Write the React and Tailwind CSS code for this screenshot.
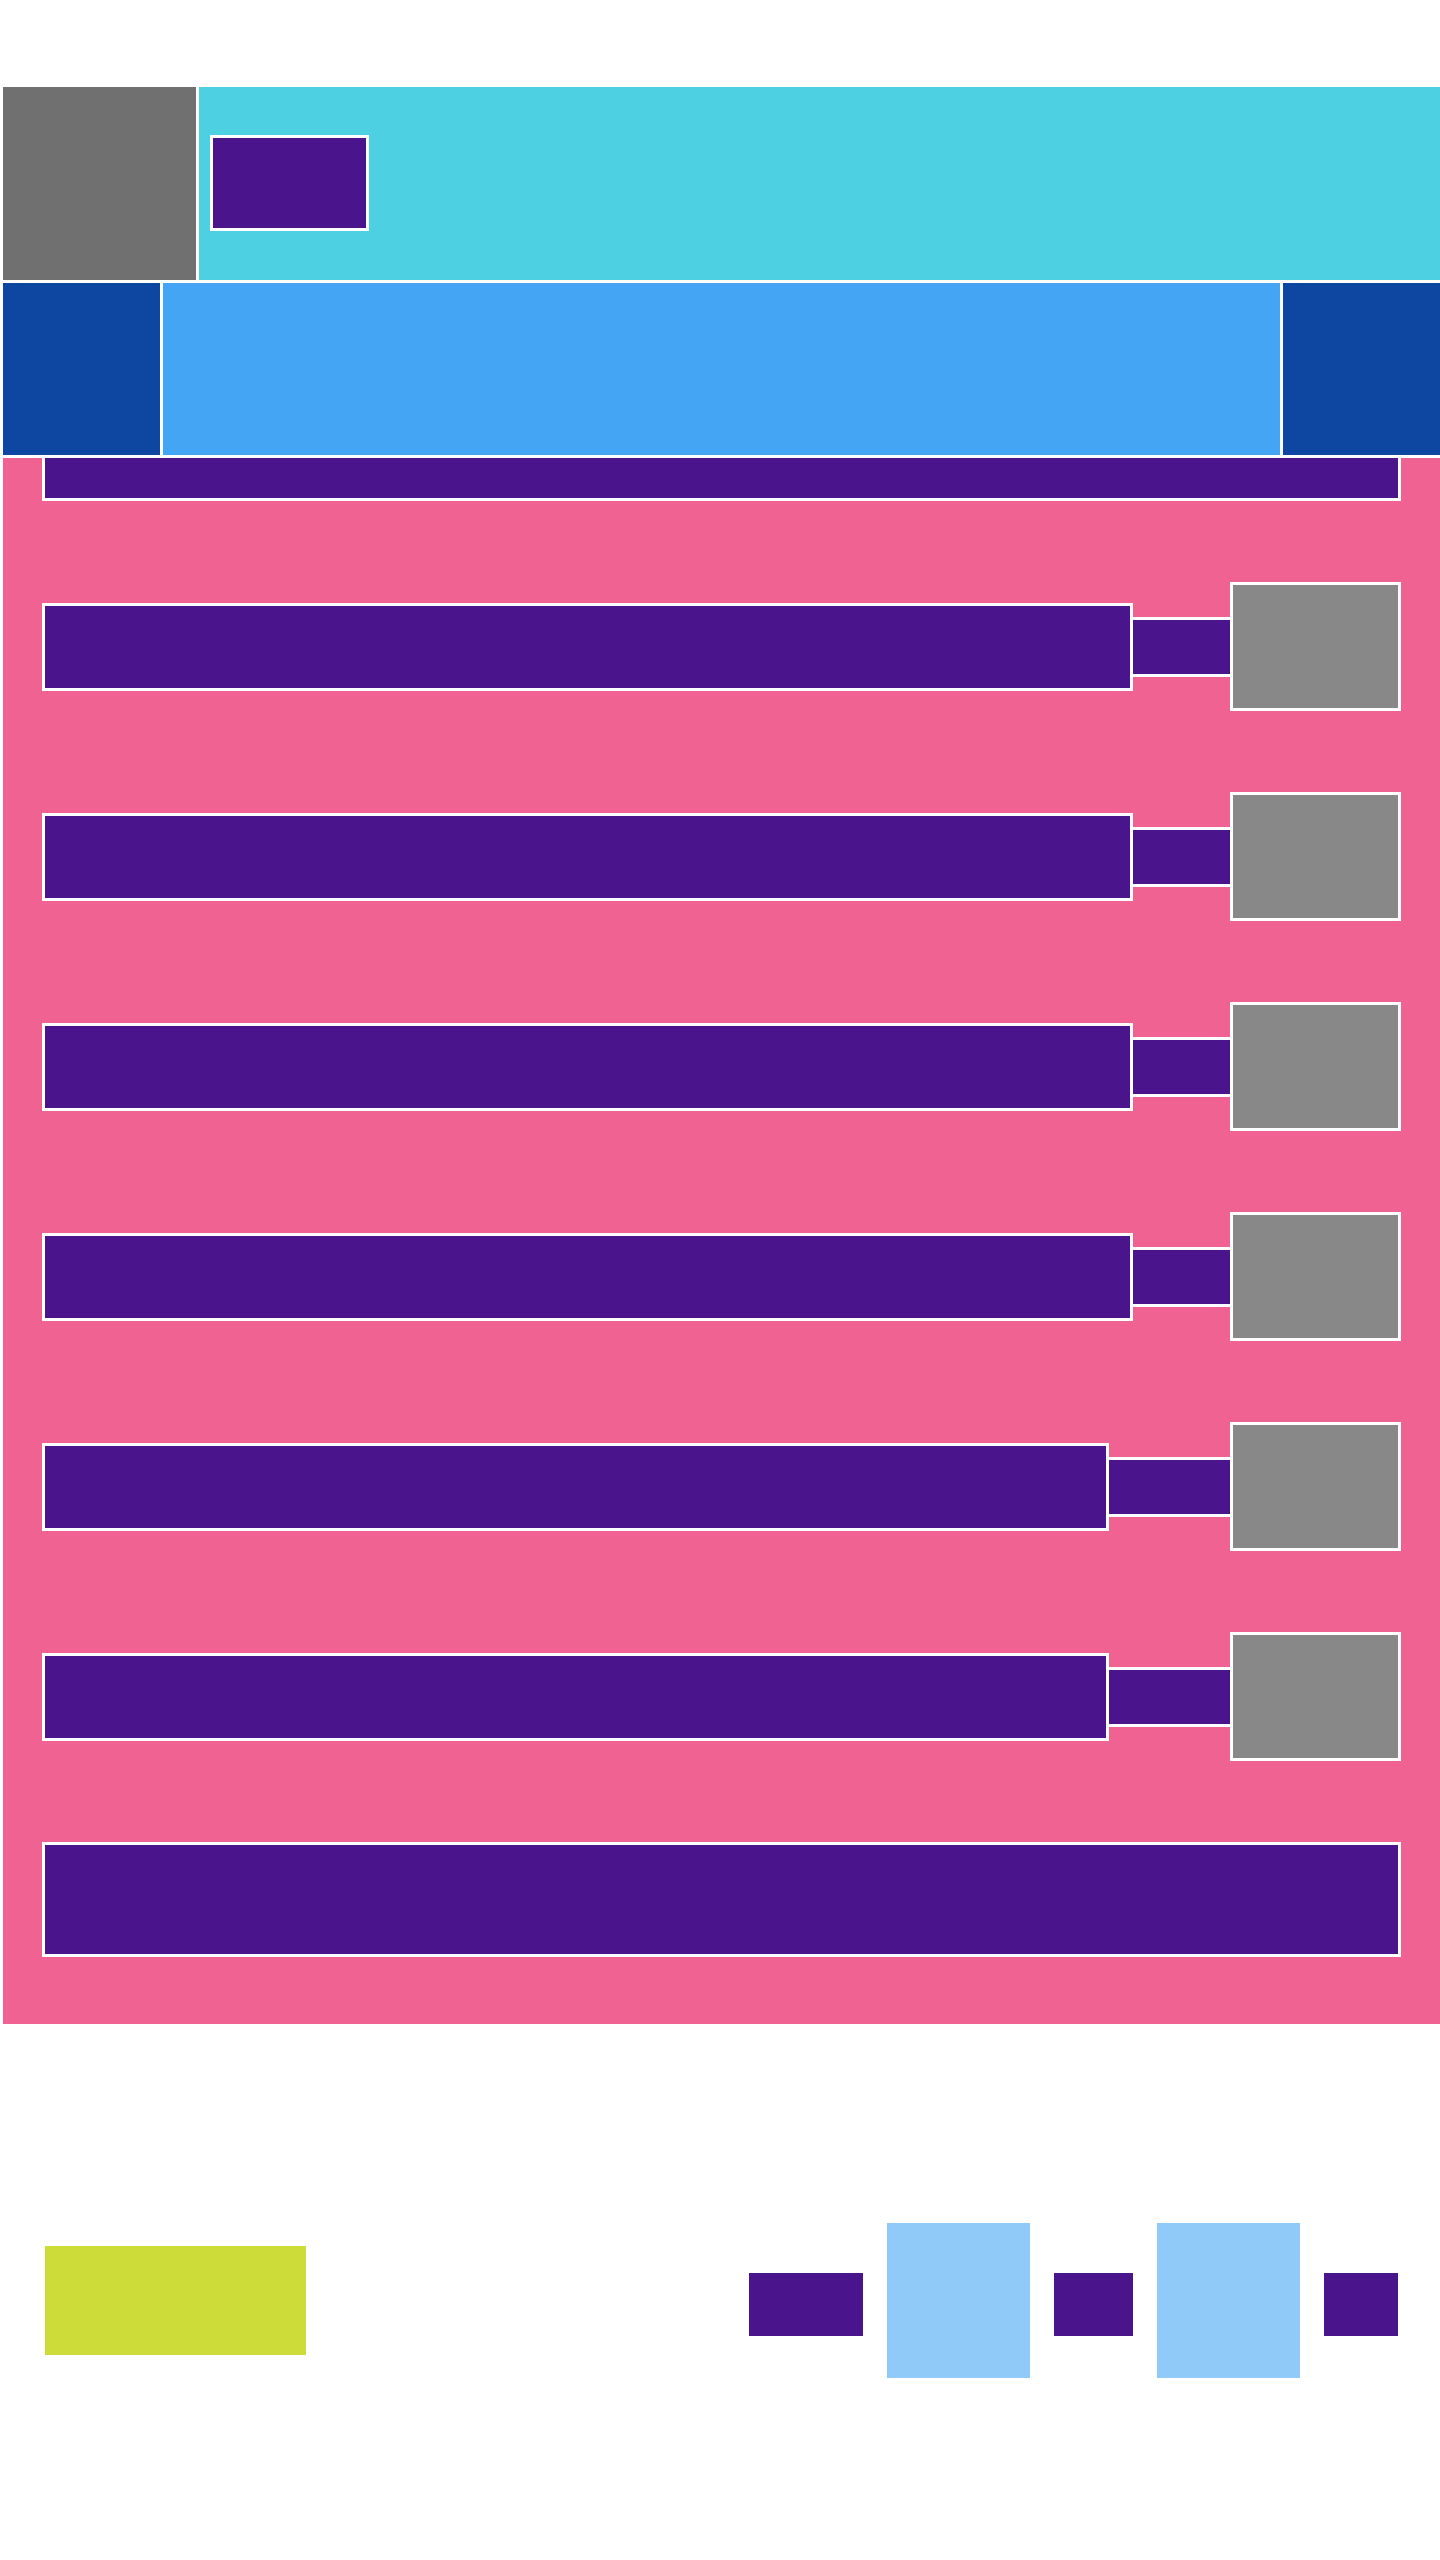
export default function App() {
  const rows = [97, 97, 97, 97, 121, 121];
  return (
    <div className="bg-white min-h-[2560px] w-[1440px] pt-[87px] pl-[3px]" style={{ fontFamily: '"Liberation Sans", sans-serif' }}>
      {/* header */}
      <div className="flex gap-[3px] h-[193px]">
        <div className="w-[193px] bg-[#707070]" />
        <div className="flex-1 bg-[#4dd0e2] pl-[11px] pt-[48px]">
          <div className="w-[159px] h-[96px] border-[3px] border-white bg-[#4a148c]" />
        </div>
      </div>
      {/* second row */}
      <div className="mt-[3px] flex gap-[3px] h-[172px]">
        <div className="w-[157px] bg-[#0d47a1]" />
        <div className="flex-1 bg-[#44a5f5]" />
        <div className="w-[157px] bg-[#0d47a1]" />
      </div>
      {/* pink list */}
      <div className="mt-[3px] bg-[#f06292] px-[39px] pb-[67px] flex flex-col gap-[81px]">
        <div className="h-[43px] border-x-[3px] border-b-[3px] border-white bg-[#4a148c]" />
        {rows.map((w, i) => (
          <div key={i} className="flex items-center h-[129px]">
            <div className="flex-1 h-[88px] border-[3px] border-white bg-[#4a148c]" />
            <div
              className={
                (w === 97 ? "w-[97px]" : "w-[121px]") +
                " h-[60px] border-y-[3px] border-white bg-[#4a148c]"
              }
            />
            <div className="w-[171px] h-[129px] border-[3px] border-white bg-[#888888]" />
          </div>
        ))}
        <div className="h-[115px] border-[3px] border-white bg-[#4a148c]" />
      </div>
      {/* bottom */}
      <div className="pt-[199px] pl-[42px] pr-[42px] flex items-center justify-between">
        <div className="w-[261px] h-[109px] bg-[#cddc39]" />
        <div className="flex items-center gap-[24px]">
          <div className="w-[114px] h-[63px] mt-[8px] bg-[#4a148c]" />
          <div className="w-[143px] h-[155px] bg-[#90caf9]" />
          <div className="w-[79px] h-[63px] mt-[8px] bg-[#4a148c]" />
          <div className="w-[143px] h-[155px] bg-[#90caf9]" />
          <div className="w-[74px] h-[63px] mt-[8px] bg-[#4a148c]" />
        </div>
      </div>
    </div>
  );
}
